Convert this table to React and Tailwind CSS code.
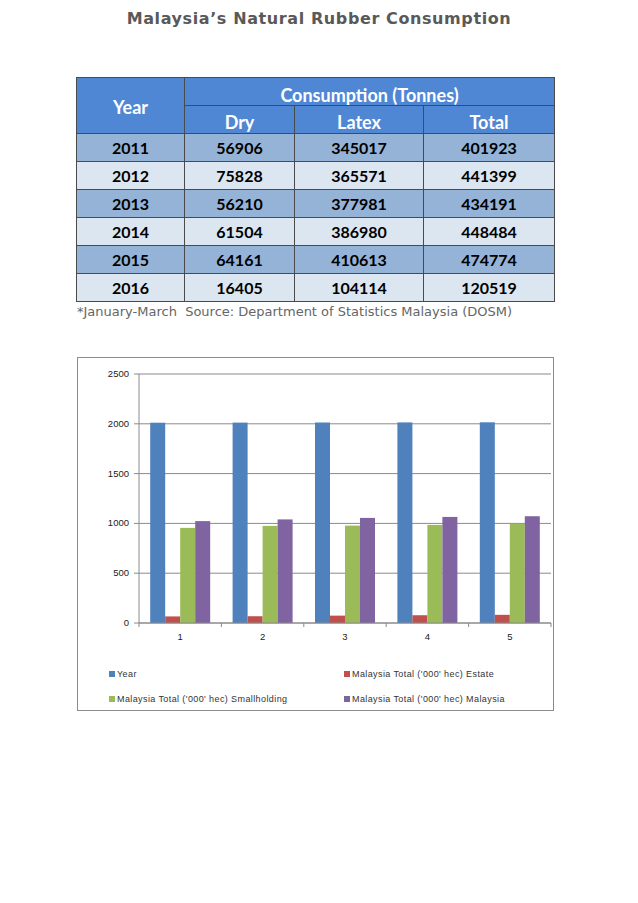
import React from 'react';

const rows = [
  { year: '2011', dry: '56906', latex: '345017', total: '401923' },
  { year: '2012', dry: '75828', latex: '365571', total: '441399' },
  { year: '2013', dry: '56210', latex: '377981', total: '434191' },
  { year: '2014', dry: '61504', latex: '386980', total: '448484' },
  { year: '2015', dry: '64161', latex: '410613', total: '474774' },
  { year: '2016', dry: '16405', latex: '104114', total: '120519' },
];

// chart values per category (1..5)
const series = [
  { name: 'Year', color: '#4f81bd', values: [2011, 2012, 2013, 2014, 2015] },
  { name: "Malaysia Total ('000' hec) Estate", color: '#c0504d', values: [66, 68, 74, 78, 82] },
  { name: "Malaysia Total ('000' hec) Smallholding", color: '#9bbb59', values: [955, 975, 978, 985, 995] },
  { name: "Malaysia Total ('000' hec) Malaysia", color: '#8064a2', values: [1023, 1040, 1055, 1065, 1072] },
];

const BarChart = () => {
  const x0 = 61;
  const x1 = 473;
  const yTop = 16;
  const yZero = 265;
  const scale = (yZero - yTop) / 2500;
  const groupW = (x1 - x0) / 5;
  const barW = 15;
  const pad = (groupW - barW * 4) / 2;

  return (
    <svg width="476" height="292" className="block">
      {/* gridlines */}
      {[0, 500, 1000, 1500, 2000, 2500].map((v) => {
        const y = yZero - v * scale;
        return (
          <g key={v}>
            <line x1={x0 - 5} x2={x1} y1={y} y2={y} stroke="#8a8a8a" strokeWidth="1" />
            <text x={x0 - 10} y={y + 3} textAnchor="end" fontSize="9.5" fill="#222" fontFamily="'Liberation Sans', Arial, sans-serif">
              {v}
            </text>
          </g>
        );
      })}
      {/* bars */}
      {[0, 1, 2, 3, 4].map((i) => (
        <g key={i}>
          {series.map((s, j) => {
            const h = s.values[i] * scale;
            return (
              <rect
                key={s.name}
                x={x0 + i * groupW + pad + j * barW}
                y={yZero - h}
                width={barW}
                height={h}
                fill={s.color}
              />
            );
          })}
          <text x={x0 + i * groupW + groupW / 2} y={282} textAnchor="middle" fontSize="9.5" fill="#222" fontFamily="'Liberation Sans', Arial, sans-serif">
            {i + 1}
          </text>
        </g>
      ))}
      {/* axes */}
      <line x1={x0} x2={x0} y1={yTop} y2={yZero} stroke="#8a8a8a" strokeWidth="1" />
      <line x1={x0} x2={x1} y1={yZero} y2={yZero} stroke="#8a8a8a" strokeWidth="1" />
      {[0, 1, 2, 3, 4, 5].map((i) => (
        <line key={i} x1={x0 + i * groupW} x2={x0 + i * groupW} y1={yZero} y2={yZero + 4} stroke="#8a8a8a" strokeWidth="1" />
      ))}
    </svg>
  );
};

export default function App() {
  return (
    <div className="w-[638px] h-[903px] bg-white">
      {/* Title */}
      <h1 className="pt-[9px] text-center text-[16px] leading-5 font-bold text-[#595959] tracking-[0.6px] font-['DejaVu_Sans',Verdana,sans-serif]">
        Malaysia’s Natural Rubber Consumption
      </h1>

      {/* Table */}
      <table className="mt-[48px] ml-[76px] border-collapse font-['Lato',sans-serif] font-bold text-[16px] text-center">
        <thead className="text-[18px] leading-[20px]">
          <tr className="h-[28px] bg-[#5087d4] text-white">
            <th rowSpan={2} className="w-[108px] p-0 pt-[3px] border border-[#4a4a4a] font-bold">Year</th>
            <th colSpan={3} className="h-[28px] p-0 pt-[7px] border border-[#4a4a4a] font-bold">Consumption (Tonnes)</th>
          </tr>
          <tr className="h-[28px] bg-[#5087d4] text-white">
            <th className="w-[110px] h-[28px] p-0 pt-[5px] border border-[#4a4a4a] font-bold">Dry</th>
            <th className="w-[129px] h-[28px] p-0 pt-[5px] border border-[#4a4a4a] font-bold">Latex</th>
            <th className="w-[131px] h-[28px] p-0 pt-[5px] border border-[#4a4a4a] font-bold">Total</th>
          </tr>
        </thead>
        <tbody>
          {rows.map((r, i) => (
            <tr key={r.year} className={`h-[28px] text-black ${i % 2 === 0 ? 'bg-[#95b3d7]' : 'bg-[#dce6f1]'}`}>
              <td className="border border-[#4a4a4a]">{r.year}</td>
              <td className="border border-[#4a4a4a]">{r.dry}</td>
              <td className="border border-[#4a4a4a]">{r.latex}</td>
              <td className="border border-[#4a4a4a]">{r.total}</td>
            </tr>
          ))}
        </tbody>
      </table>

      <p className="ml-[77px] mt-[2px] text-[13px] leading-4 text-[#666] font-['DejaVu_Sans',Verdana,sans-serif]">
        *January-March&nbsp; Source: Department of Statistics Malaysia (DOSM)
      </p>

      {/* Chart */}
      <div className="ml-[77px] mt-[37px] w-[477px] h-[354px] border border-[#8c8c8c]">
        <BarChart />
        <div className="grid grid-cols-[235px_1fr] gap-y-[11px] pl-[31px] pt-[17px] text-[9px] leading-[14px] text-[#333] tracking-[0.4px] font-['Liberation_Sans',Arial,sans-serif]">
          {series.map((s) => (
            <div key={s.name} className="flex items-center gap-[2px]">
              <span className="w-[6px] h-[6px]" style={{ backgroundColor: s.color }} />
              <span>{s.name}</span>
            </div>
          ))}
        </div>
      </div>
    </div>
  );
}
